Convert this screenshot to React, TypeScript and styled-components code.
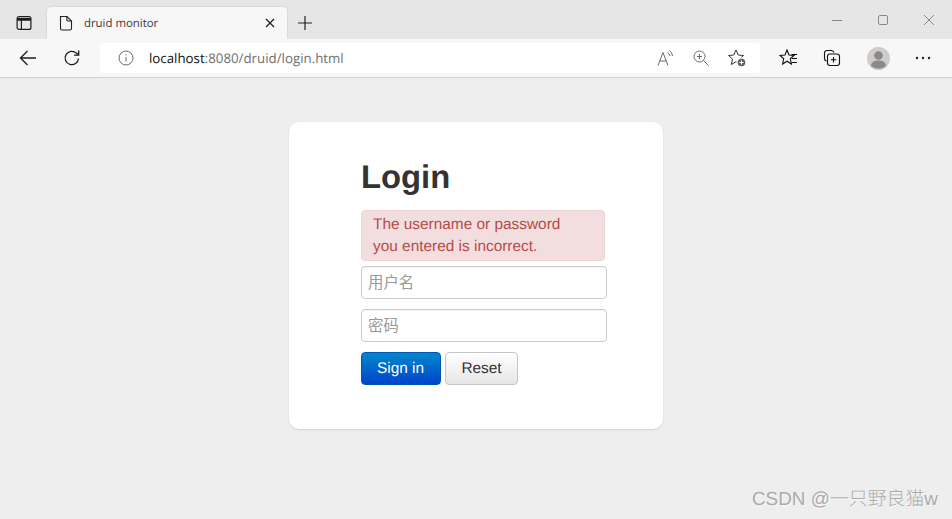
import React from "react";
import styled, { createGlobalStyle } from "styled-components";

const Global = createGlobalStyle`
  html, body { margin: 0; padding: 0; height: 100%; }
  body { font-family: "Liberation Sans", Arial, sans-serif; background: #eeeeee; overflow: hidden; text-rendering: geometricPrecision; }
  * { box-sizing: border-box; }
`;

const Page = styled.div`
  position: relative;
  width: 952px;
  height: 519px;
  display: flex;
  flex-direction: column;
`;

const TabStrip = styled.div`
  height: 39px;
  background: #e6e6e6;
  display: flex;
  align-items: flex-end;
  flex: none;
`;

const StripIcon = styled.div`
  width: 47px;
  height: 32px;
  display: flex;
  align-items: center;
  justify-content: center;
`;

const Tab = styled.div`
  width: 240px;
  height: 32px;
  background: #f7f7f7;
  border-radius: 4px 4px 0 0;
  display: flex;
  align-items: center;
  padding: 0 11px;
  box-shadow: 0 0 2px rgba(0, 0, 0, 0.18);
`;

const TabTitle = styled.span`
  flex: 1;
  margin-left: 10px;
  font-family: "Open Sans", "Liberation Sans", sans-serif;
  font-size: 11.4px;
  color: #3a3a3a;
`;

const NewTab = styled.div`
  width: 36px;
  height: 32px;
  display: flex;
  align-items: center;
  justify-content: center;
`;

const WindowControls = styled.div`
  margin-left: auto;
  height: 39px;
  display: flex;
  align-items: center;
`;

const WinButton = styled.div`
  width: 46px;
  height: 39px;
  display: flex;
  align-items: center;
  justify-content: center;
`;

const Toolbar = styled.div`
  height: 39px;
  flex: none;
  background: #f7f7f7;
  border-bottom: 1px solid #cfcfcf;
  display: flex;
  align-items: center;
`;

const NavButton = styled.div<{ $w: number }>`
  width: ${(p) => p.$w}px;
  height: 30px;
  display: flex;
  align-items: center;
  justify-content: center;
  flex: none;
`;

const AddressBar = styled.div`
  width: 660px;
  height: 30px;
  background: #ffffff;
  border-radius: 4px;
  display: flex;
  align-items: center;
  flex: none;
  margin-right: 10px;
  padding-left: 18px;
`;

const Url = styled.span`
  flex: 1;
  margin-left: 15px;
  font-family: "Open Sans", "Liberation Sans", sans-serif;
  font-size: 13.3px;
  color: #6f6f6f;
  b { font-weight: 400; color: #111; }
`;

const AddrIcons = styled.div`
  display: flex;
  align-items: center;
  gap: 17px;
  padding-right: 13px;
`;

const Main = styled.main`
  flex: 1;
  background: #eeeeee;
  display: flex;
  justify-content: center;
  align-items: flex-start;
  padding-top: 44px;
`;

const Card = styled.form`
  width: 374px;
  height: 307px;
  background: #ffffff;
  border-radius: 10px;
  box-shadow: 0 1px 2px rgba(0, 0, 0, 0.12);
  padding: 32px 0 0 72px;
`;

const Heading = styled.h1`
  margin: 0 0 11px;
  height: 45px;
  font-size: 32.8px;
  line-height: 45px;
  font-weight: 700;
  color: #333333;
`;

const Alert = styled.div`
  width: 244px;
  height: 51px;
  margin-bottom: 5px;
  padding: 3px 35px 0 11px;
  background: #f2dede;
  border: 1px solid #eed3d7;
  border-radius: 4px;
  color: #b94a48;
  font-size: 15.4px;
  line-height: 22px;
`;

const Field = styled.input`
  display: block;
  width: 246px;
  height: 33px;
  margin-bottom: 10px;
  padding: 0 6px;
  background: #fff;
  border: 1px solid #cccccc;
  border-radius: 4px;
  font-family: "Liberation Sans", "Noto Sans CJK SC", sans-serif;
  font-size: 15.4px;
  box-shadow: inset 0 1px 1px rgba(0, 0, 0, 0.05);
  &::placeholder { color: #999; opacity: 1; }
`;

const Buttons = styled.div`
  display: flex;
  gap: 4px;
`;

const Btn = styled.button<{ $primary?: boolean }>`
  height: 33px;
  width: ${(p) => (p.$primary ? 80 : 73)}px;
  padding: 0 ${(p) => (p.$primary ? 1 : 0)}px 0 0;
  border-radius: 4px;
  font-family: "Liberation Sans", sans-serif;
  font-size: 15.4px;
  text-rendering: geometricPrecision;
  color: ${(p) => (p.$primary ? "#fff" : "#333")};
  border: 1px solid ${(p) => (p.$primary ? "#0055b3" : "#c6c6c6")};
  background: ${(p) =>
    p.$primary
      ? "linear-gradient(to bottom, #0088cc, #0044cc)"
      : "linear-gradient(to bottom, #ffffff, #e6e6e6)"};
`;

const Watermark = styled.div`
  position: absolute;
  right: 14px;
  bottom: 8px;
  font-family: "Liberation Sans", "Noto Sans CJK SC", sans-serif;
  font-size: 18.9px;
  font-weight: 300;
  line-height: 22px;
  color: #ababab;
  text-shadow: 1px 1px 1px rgba(255,255,255,0.6);
  white-space: nowrap;
`;

const Svg: React.FC<{ s?: number; c?: string; w?: number; children: React.ReactNode }> = ({ s = 20, c = "#1c1c1c", w = 1, children }) => (
  <svg width={s} height={s} viewBox={`0 0 ${s} ${s}`} fill="none" stroke={c} strokeWidth={w}>
    {children}
  </svg>
);

export default function App() {
  return (
    <Page>
      <Global />
      <TabStrip>
        <StripIcon>
          <Svg s={16} w={1.2}>
            <rect x="1.1" y="1.6" width="13.8" height="12.8" rx="2" />
            <path d="M1.1 5.2h13.8M5.4 5.2v9.2" />
            <path d="M1.5 3h13v2h-13z" fill="#1c1c1c" stroke="none" />
          </Svg>
        </StripIcon>
        <Tab>
          <Svg s={16} w={1.1} c="#222">
            <path d="M2.5 1.5h6.500l4.500 4.500v7.500a1.500 1.500 0 0 1-1.500 1.500h-8a1.500 1.500 0 0 1-1.500-1.500z" />
            <path d="M8.800 1.500v3.200a1.300 1.300 0 0 0 1.300 1.300h3.400" />
          </Svg>
          <TabTitle>druid monitor</TabTitle>
          <Svg s={12} w={1.3} c="#222">
            <path d="M2 2l8 8M10 2l-8 8" />
          </Svg>
        </Tab>
        <NewTab>
          <Svg s={16} w={1.2} c="#222">
            <path d="M8 1v14M1 8h14" />
          </Svg>
        </NewTab>
        <WindowControls>
          <WinButton>
            <Svg s={12} c="#8a8a8a"><path d="M1 6.500h10" /></Svg>
          </WinButton>
          <WinButton>
            <Svg s={12} c="#8a8a8a"><rect x="1.500" y="1.500" width="9" height="9" rx="1.500" /></Svg>
          </WinButton>
          <WinButton>
            <Svg s={12} c="#8a8a8a"><path d="M1 1l10 10M11 1L1 11" /></Svg>
          </WinButton>
        </WindowControls>
      </TabStrip>
      <Toolbar>
        <NavButton $w={55}>
          <Svg s={18} w={1.3}>
            <path d="M17 9H1.500M8.500 2L1.500 9l7 7" />
          </Svg>
        </NavButton>
        <NavButton $w={34}>
          <Svg s={18} w={1.3}>
            <path d="M15.500 9.500a6.700 6.700 0 1 1-2.100-5.400L15.600 6" />
            <path d="M15.700 1.500V6.200H11" />
          </Svg>
        </NavButton>
        <NavButton $w={11} />
        <AddressBar>
          <Svg s={16} c="#6a6a6a">
            <circle cx="8" cy="8" r="7" />
            <path d="M8 7v4.500M8 4.200v1.300" />
          </Svg>
          <Url><b>localhost</b>:8080/druid/login.html</Url>
          <AddrIcons>
            <Svg s={18} c="#6a6a6a">
              <path d="M1 16.500L6 3.500l5 13M2.800 12h6.400" />
              <path d="M10.500 3.500a5 5 0 0 1 2.500 3.500M12.500 1.500a7.500 7.500 0 0 1 3 5.500" />
            </Svg>
            <Svg s={18} c="#6a6a6a">
              <circle cx="7.500" cy="7.500" r="5.500" />
              <path d="M11.500 11.500l5 5M7.500 5v5M5 7.500h5" />
            </Svg>
            <Svg s={20} c="#333">
              <path d="M9 2l2.200 5 5.300.5-4 3.600 1.200 5.400L9 13.700 4.300 16.500l1.200-5.400-4-3.600L6.800 7z" />
              <circle cx="14.500" cy="14.500" r="5" fill="#fff" stroke="none" />
              <circle cx="14.500" cy="14.500" r="3.800" fill="#5f5f5f" stroke="none" />
              <path d="M14.500 12.400v4.200M12.400 14.500h4.200" stroke="#fff" />
            </Svg>
          </AddrIcons>
        </AddressBar>
        <NavButton $w={37}>
          <Svg s={20} w={1.1} c="#111">
            <path d="M8 2l2 5 5 .5-3.700 3.300 1.100 5.200L8 13.200 3.600 16l1.100-5.200L1 7.500 6 7z" fill="#f7f7f7" />
            <path d="M12.500 6.500h5.500M13 10.500h5M12.500 14.500h5.500" />
          </Svg>
        </NavButton>
        <NavButton $w={49}>
          <Svg s={18} w={1.1} c="#111">
            <path d="M3.500 12A2.500 2.500 0 0 1 1.500 9.500V4a2.500 2.500 0 0 1 2.500-2.500h4.500a3 3 0 0 1 2.500 2" />
            <rect x="4.500" y="5" width="12" height="11.500" rx="2.500" />
            <path d="M10.500 8v5.500M7.800 10.800h5.500" />
          </Svg>
        </NavButton>
        <NavButton $w={44}>
          <svg width="23" height="23" viewBox="0 0 23 23">
            <circle cx="11.500" cy="11.500" r="11.500" fill="#cfcdcb" />
            <circle cx="11.500" cy="8.500" r="4.300" fill="#8c8986" />
            <path d="M4 19c0-3.500 3-5.500 7.500-5.500S19 15.500 19 19a11.500 11.500 0 0 1-15 0z" fill="#8c8986" />
          </svg>
        </NavButton>
        <NavButton $w={46}>
          <svg width="16" height="4" viewBox="0 0 16 4">
            <circle cx="2" cy="2" r="1.200" fill="#222" />
            <circle cx="8" cy="2" r="1.200" fill="#222" />
            <circle cx="14" cy="2" r="1.200" fill="#222" />
          </svg>
        </NavButton>
      </Toolbar>
      <Main>
        <Card onSubmit={(e) => e.preventDefault()}>
          <Heading>Login</Heading>
          <Alert>The username or password you entered is incorrect.</Alert>
          <Field placeholder="用户名" />
          <Field placeholder="密码" />
          <Buttons>
            <Btn $primary>Sign in</Btn>
            <Btn type="reset">Reset</Btn>
          </Buttons>
        </Card>
      </Main>
      <Watermark>CSDN @一只野良猫w</Watermark>
    </Page>
  );
}
